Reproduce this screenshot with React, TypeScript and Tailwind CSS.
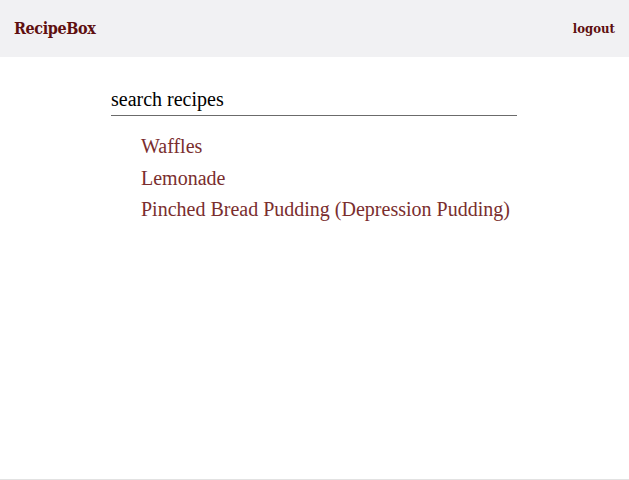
import { useState } from "react";

const recipes = ["Waffles", "Lemonade", "Pinched Bread Pudding (Depression Pudding)"];

export default function App() {
    const [query, setQuery] = useState("");

    return (
        <div className="h-[480px] flex flex-col border-b border-[#e2e2e2] bg-white">
            <header className="h-[57px] bg-[#f1f1f3] flex items-center justify-between px-[14px] font-['DejaVu_Serif_Condensed','DejaVu_Serif',serif] text-[#5e0f0f]">
                <span className="text-[16px] font-bold tracking-[-0.4px]">RecipeBox</span>
                <a href="#" className="text-[13px] font-bold">logout</a>
            </header>
            <main className="w-[406px] ml-[111px] mt-[26px] font-['Liberation_Serif',serif]">
                <input
                    value={query}
                    onChange={(e) => setQuery(e.target.value)}
                    placeholder="search recipes"
                    className="w-full h-[33px] text-[20px] text-black placeholder:text-black border-b border-[#6b6b6b] outline-none"
                />
                <ul className="mt-[18px] pl-[30px] flex flex-col gap-[6.5px]">
                    {recipes.map((r) => (
                        <li key={r} className="text-[20px] leading-[25px] text-[#7a2e2e]">{r}</li>
                    ))}
                </ul>
            </main>
        </div>
    );
}
